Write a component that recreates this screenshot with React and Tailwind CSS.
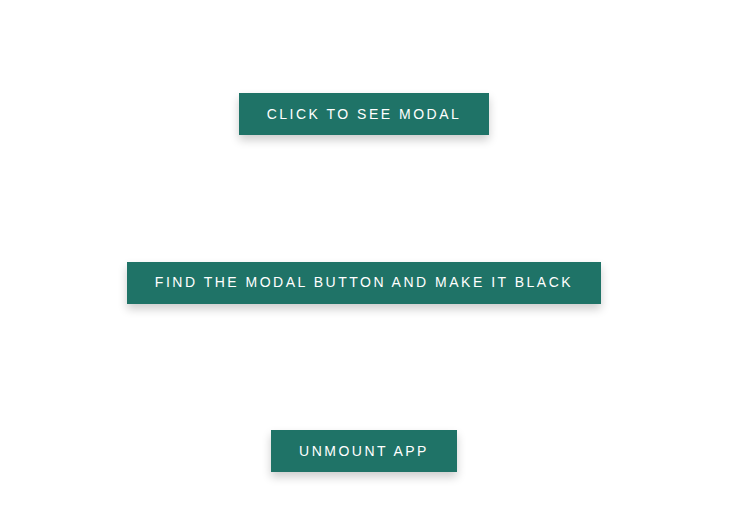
export default function App() {
  const btn =
    "h-[42px] px-7 bg-[#1f7367] text-white text-[14px] tracking-[2.5px] uppercase shadow-[0_5px_9px_rgba(0,0,0,0.2)] font-['Liberation_Sans',Arial,sans-serif]";

  return (
    <div className="min-h-[519px] bg-white flex flex-col items-center pt-[93px] pr-[2px] gap-[126.5px]">
      <button className={btn}>Click to see modal</button>
      <button className={btn}>Find the modal button and make it black</button>
      <button className={btn}>Unmount app</button>
    </div>
  );
}
